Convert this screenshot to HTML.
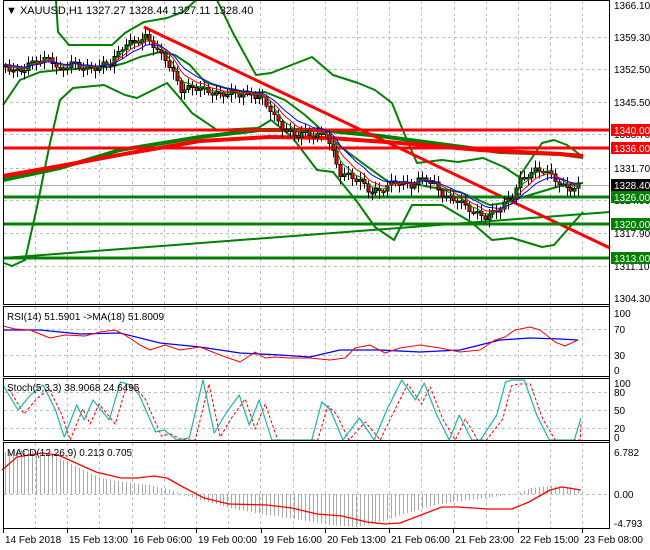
<!DOCTYPE html>
<html><head><meta charset="utf-8"><style>
html,body{margin:0;padding:0;background:#fff;width:650px;height:550px;overflow:hidden}
svg{display:block;font-family:"Liberation Sans",sans-serif}
</style></head><body>
<svg id="s" width="650" height="550" viewBox="0 0 650 550" xmlns="http://www.w3.org/2000/svg" shape-rendering="crispEdges">
<rect width="650" height="550" fill="#fff"/>
<g id="grid" stroke="#c0c0c0" stroke-dasharray="3,3" stroke-width="1"></g>
<g id="main" shape-rendering="auto"></g>
<g id="cand"></g>
<g id="ind" shape-rendering="auto"></g>
<g stroke="#000" fill="none">
<rect x="3.5" y="0.5" width="606" height="304"/>
<rect x="3.5" y="306.5" width="606" height="70"/>
<rect x="3.5" y="378.5" width="606" height="62"/>
<rect x="3.5" y="442.5" width="606" height="86"/>
</g>
<g id="lab" font-size="11" fill="#000"></g>
</svg>
<script>
var NS="http://www.w3.org/2000/svg";
function el(p,t,a,txt){var e=document.createElementNS(NS,t);for(var k in a)e.setAttribute(k,a[k]);if(txt!==undefined)e.textContent=txt;document.getElementById(p).appendChild(e);return e;}
function pl(p,pts,c,w,extra){var a={points:pts.map(function(q){return q.join(",")}).join(" "),fill:"none",stroke:c,"stroke-width":w,"stroke-linejoin":"round"};for(var k in extra)a[k]=extra[k];return el(p,"polyline",a);}
for(var x=35;x<606;x+=32.2){var xx=Math.round(x)+.5;el("grid","line",{x1:xx,y1:1,x2:xx,y2:304});el("grid","line",{x1:xx,y1:307,x2:xx,y2:376});el("grid","line",{x1:xx,y1:379,x2:xx,y2:440});el("grid","line",{x1:xx,y1:443,x2:xx,y2:528});}
[37,69,102,134,168,200,233,266].forEach(function(y){el("grid","line",{x1:4,y1:y+.5,x2:609,y2:y+.5});});
[329,355].forEach(function(y){el("grid","line",{x1:4,y1:y+.5,x2:609,y2:y+.5});});
[392,410,428].forEach(function(y){el("grid","line",{x1:4,y1:y+.5,x2:609,y2:y+.5});});
el("grid","line",{x1:4,y1:494.5,x2:609,y2:494.5});
el("grid","line",{x1:4,y1:185.5,x2:609,y2:185.5,stroke:"#b0b0b0","stroke-dasharray":"none"});
var m="main";
pl(m,[[4,263],[12,266],[25,260],[37,207],[50,143],[60,100],[73,88],[104,85],[125,95],[137,98],[167,83],[179,97],[192,113],[217,130],[258,128],[271,120],[292,137],[317,170],[333,172],[358,203],[375,227],[394,240],[412,205],[442,205],[471,222],[492,240],[512,238],[542,247],[554,245],[583,212]],"#008000",2);
pl(m,[[56,0],[58,32],[69,45],[112,45],[125,33],[144,22],[167,18],[183,12],[196,0]],"#008000",2);
pl(m,[[217,0],[233,33],[256,75],[271,73],[312,57],[333,75],[358,83],[375,90],[392,103],[404,133],[417,163],[442,160],[458,162],[483,158],[504,167],[519,177],[542,143],[554,140],[567,145],[583,157]],"#008000",2);
pl(m,[[3,105],[20,80],[40,72],[60,70],[90,68],[110,67],[125,63],[140,57],[160,52],[175,55],[190,65],[205,82],[225,88],[250,93],[265,92],[285,100],[305,115],[325,133],[345,150],[365,165],[390,183],[410,183],[430,187],[460,192],[490,205],[505,203],[520,198],[540,192],[560,186],[583,183]],"#008000",2);
pl(m,[[3,258],[610,212]],"#008000",2);
pl(m,[[3,180],[60,168],[120,150],[200,137],[260,130],[320,130],[380,136],[440,144],[500,152],[560,154],[583,157]],"#008000",4);
pl(m,[[3,176],[60,166],[130,153],[200,141],[270,137],[330,138],[400,143],[480,150],[560,154],[583,156]],"#ff0000",4);
pl(m,[[144,27],[610,248]],"#ff0000",3);
[[130,"#ff0000"],[148,"#ff0000"],[197,"#008000"],[224,"#008000"],[258,"#008000"]].forEach(function(h){el(m,"line",{x1:3,y1:h[0],x2:609,y2:h[0],stroke:h[1],"stroke-width":3});});
var P=[[5,65],[15,70],[25,68],[35,63],[45,60],[50,55],[55,65],[60,70],[70,65],[80,68],[90,67],[100,65],[110,65],[118,55],[125,42],[135,40],[145,38],[152,45],[160,55],[165,58],[170,65],[180,90],[190,90],[200,88],[210,90],[220,95],[235,95],[250,92],[260,98],[268,108],[275,120],[285,127],[295,135],[305,135],[315,137],[325,130],[330,145],[340,175],[350,178],[360,180],[370,190],[380,193],[390,185],[400,180],[410,185],[425,180],[435,185],[445,195],[455,200],[465,208],[475,212],[485,215],[495,213],[505,205],[512,195],[518,180],[525,175],[535,172],[545,172],[555,178],[565,187],[575,190],[580,187]];
function f(x){for(var i=0;i<P.length-1;i++){if(x<=P[i+1][0]){var t=(x-P[i][0])/(P[i+1][0]-P[i][0]);return P[i][1]+t*(P[i+1][1]-P[i][1]);}}return P[P.length-1][1];}
var closes=[],xs=[];var prev=f(5);
for(var x=5,i=0;x<=580;x+=3.9,i++){
 var c=f(x)+Math.sin(i*1.7)*3+Math.sin(i*0.63)*2;var o=prev;prev=c;
 var hi=Math.min(o,c)-2-Math.abs(Math.sin(i*2.3))*5, lo=Math.max(o,c)+2+Math.abs(Math.cos(i*1.9))*6;
 var xi=Math.round(x)+.5;closes.push(c);xs.push(x);
 el("cand","line",{x1:xi,y1:hi,x2:xi,y2:lo,stroke:"#000"});
 var bt=Math.min(o,c),bh=Math.max(2,Math.abs(o-c));
 el("cand","rect",{x:xi-1.5,y:bt,width:3,height:bh,fill:(c<o?"#008000":"#ff0000"),stroke:"#000","stroke-width":.6});
}
function ema(a,n){var k=2/(n+1),r=[],v=a[0];a.forEach(function(q){v=q*k+v*(1-k);r.push(v)});return r;}
[[4,"#008000"],[7,"#ff0000"],[11,"#0000ff"]].forEach(function(e){var r=ema(closes,e[0]);pl("ind",xs.map(function(x,i){return [x,r[i]-1]}),e[1],1);});
pl("ind",[[3,330],[40,330],[80,334],[120,333],[160,343],[200,347],[240,353],[280,355],[310,357],[340,350],[380,350],[420,352],[460,350],[500,340],[530,338],[560,339],[578,340]],"#0000ff",1.3);
pl("ind",[[3,326],[15,329],[30,330],[50,338],[65,335],[85,336],[100,332],[115,330],[125,335],[140,345],[150,350],[165,345],[180,350],[200,347],[220,355],[240,362],[255,352],[265,358],[275,357],[290,358],[310,358],[330,360],[345,358],[355,348],[370,345],[385,353],[400,348],[420,345],[440,348],[460,352],[480,350],[495,340],[505,337],[515,330],[530,327],[540,330],[555,342],[565,346],[578,340]],"#ff0000",1);
var S=[[3,385],[15,410],[25,395],[35,385],[45,410],[52,437],[62,405],[68,420],[75,400],[88,420],[97,382],[105,385],[112,395],[125,432],[132,430],[142,440],[152,438],[163,380],[172,433],[182,412],[192,395],[200,425],[208,400],[218,440],[250,440],[258,402],[265,410],[275,440],[288,418],[300,440],[310,410],[322,380],[333,400],[340,383],[350,415],[360,440],[368,415],[378,440],[385,440],[398,415],[405,382],[410,380],[420,380],[430,415],[440,440],[460,440],[470,415],[478,382],[490,379],[500,379],[510,380],[520,400],[535,440],[560,440],[570,440],[578,418]].map(function(q){return [3+(q[0]-3)*1.0035*1.25>581?581:3+(q[0]-3)*1.25,q[1]]});
S=S.filter(function(q,i){return q[0]<581||i==S.length-1});
pl("ind",S.map(function(q){return [Math.min(581,q[0]+6),Math.min(440,q[1]+4)]}),"#ff0000",1,{"stroke-dasharray":"3,2"});
pl("ind",S,"#20b2aa",1.2);
var mh=[[3,452],[20,450],[40,452],[55,456],[75,466],[100,478],[125,482],[150,485],[170,490],[180,494],[200,500],[230,508],[260,514],[300,520],[330,525],[355,527],[380,522],[410,512],[440,504],[470,500],[500,496],[517,494],[530,488],[550,486],[570,487],[580,490]];
function fm(x){for(var i=0;i<mh.length-1;i++){if(x<=mh[i+1][0]){var t=(x-mh[i][0])/(mh[i+1][0]-mh[i][0]);return mh[i][1]+t*(mh[i+1][1]-mh[i][1]);}}return 494;}
for(var x=5;x<=580;x+=3.9){var y=fm(x);var xi=Math.round(x)+.5;el("ind","line",{x1:xi,y1:494,x2:xi,y2:y,stroke:"#a9a9a9","stroke-width":1,"shape-rendering":"crispEdges"});}
pl("ind",[[2,470],[17,457],[42,453],[58,455],[96,472],[121,478],[137,478],[154,476],[167,478],[183,487],[204,498],[229,504],[267,505],[292,508],[317,514],[342,516],[367,522],[385,524],[400,523],[421,515],[442,507],[458,507],[488,509],[512,509],[529,502],[550,490],[562,487],[581,490]],"#ff0000",1.3);
var L="lab";
el(L,"text",{x:6,y:14,"font-size":11},"▼ XAUUSD,H1  1327.27 1328.44 1327.11 1328.40");
el(L,"text",{x:7,y:320,"font-size":10},"RSI(14) 51.5901  ->MA(18) 51.8009");
el(L,"text",{x:7,y:391,"font-size":10},"Stoch(5,3,3) 38.9068 24.6495");
el(L,"text",{x:7,y:456,"font-size":10},"MACD(12,26,9) 0.213 0.705");
[["1366.10",5],["1359.30",37],["1352.50",69],["1345.50",102],["1338.70",134],["1331.70",168],["1324.90",200],["1317.90",233],["1311.10",266],["1304.30",298]].forEach(function(a){el(L,"text",{x:614,y:a[1]+4,"font-size":10},a[0]);});
[["1340.00",130,"#ff0000"],["1336.00",148,"#ff0000"],["1328.40",185,"#000"],["1326.00",197,"#008000"],["1320.00",224,"#008000"],["1313.00",258,"#008000"]].forEach(function(a){el(L,"rect",{x:611,y:a[1]-6,width:39,height:12,fill:a[2]});el(L,"text",{x:614,y:a[1]+4,"font-size":10,fill:"#fff"},a[0]);});
[["100",313],["70",329],["30",355],["0",370],["100",383],["80",392],["50",410],["20",428],["0",437],["6.782",452],["0.00",494],["-4.793",523]].forEach(function(a){el(L,"text",{x:614,y:a[1]+4,"font-size":10},a[0]);});
[["14 Feb 2018",3],["15 Feb 13:00",67],["16 Feb 06:00",131],["19 Feb 00:00",196],["19 Feb 16:00",261],["20 Feb 13:00",325],["21 Feb 06:00",389],["21 Feb 23:00",453],["22 Feb 15:00",518],["23 Feb 08:00",582]].forEach(function(a){el(L,"line",{x1:a[1]+.5,y1:529,x2:a[1]+.5,y2:533,stroke:"#000"});el(L,"text",{x:a[1]+2,y:543,"font-size":10},a[0]);});
el(L,"line",{x1:609.5,y1:0,x2:609.5,y2:529,stroke:"#000"});
</script>
</body></html>
